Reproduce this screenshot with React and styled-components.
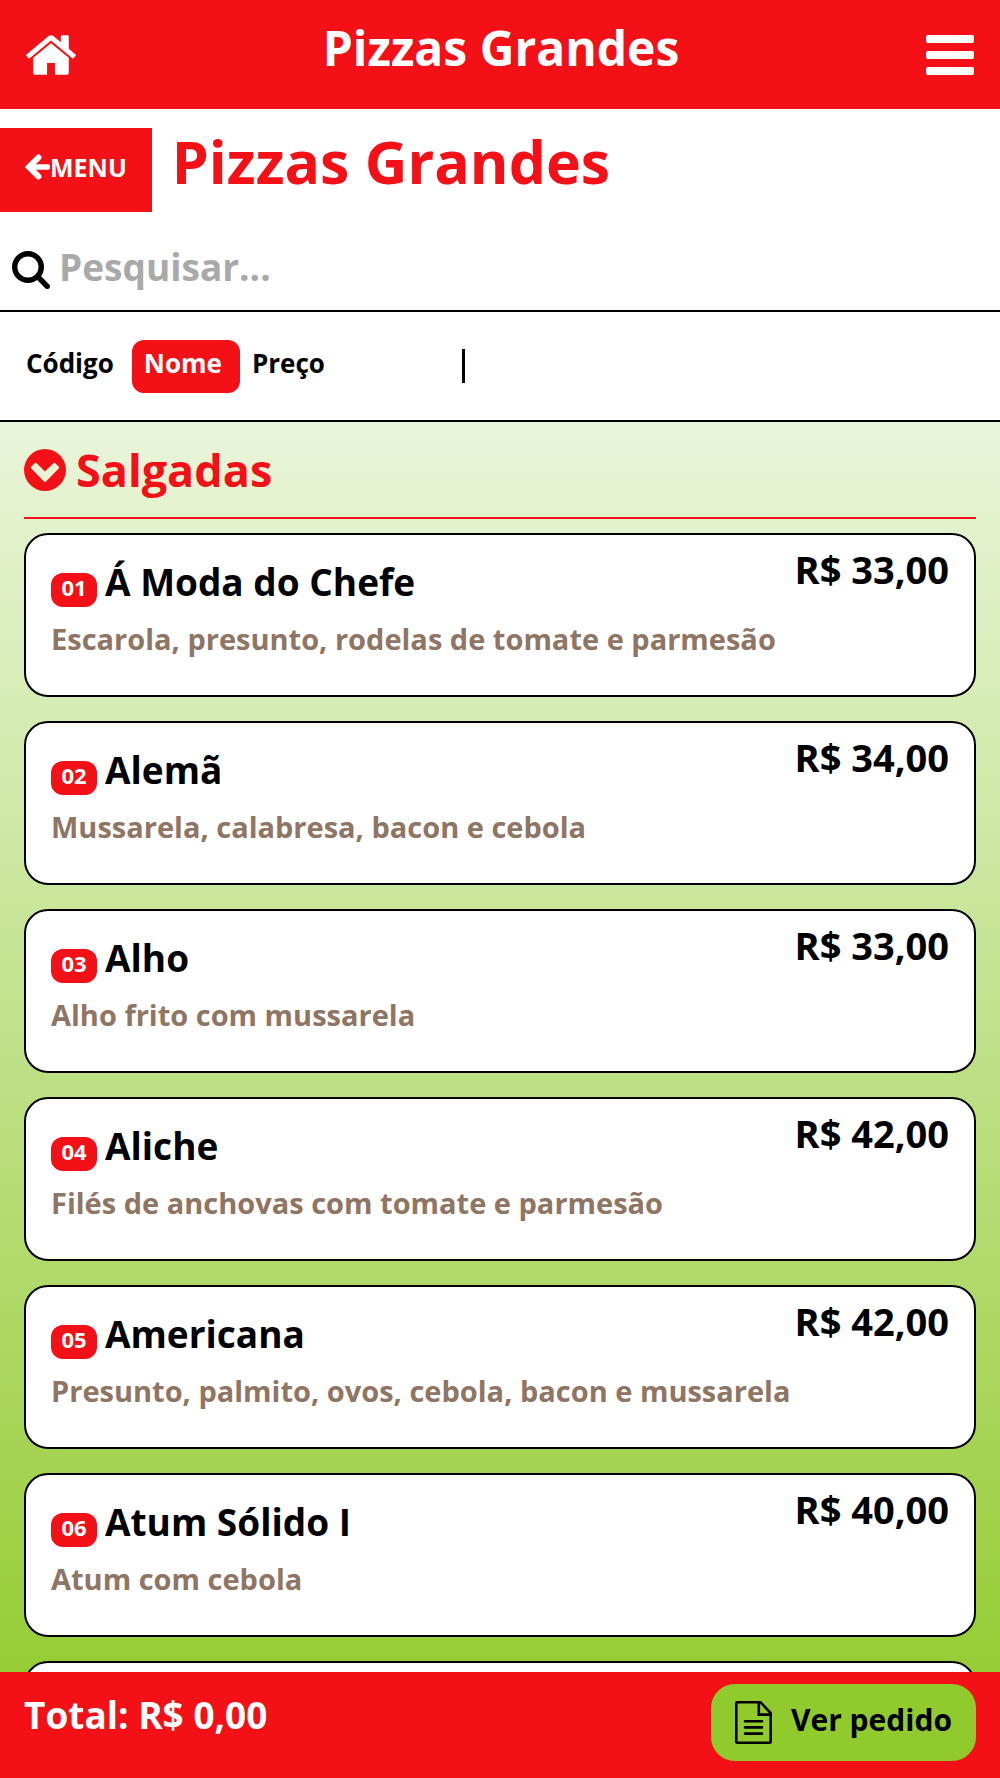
import React, { useState } from "react";
import styled, { createGlobalStyle } from "styled-components";

const pizzas = [
  {
    code: "01",
    name: "Á Moda do Chefe",
    price: "R$ 33,00",
    description: "Escarola, presunto, rodelas de tomate e parmesão",
  },
  {
    code: "02",
    name: "Alemã",
    price: "R$ 34,00",
    description: "Mussarela, calabresa, bacon e cebola",
  },
  {
    code: "03",
    name: "Alho",
    price: "R$ 33,00",
    description: "Alho frito com mussarela",
  },
  {
    code: "04",
    name: "Aliche",
    price: "R$ 42,00",
    description: "Filés de anchovas com tomate e parmesão",
  },
  {
    code: "05",
    name: "Americana",
    price: "R$ 42,00",
    description: "Presunto, palmito, ovos, cebola, bacon e mussarela",
  },
  {
    code: "06",
    name: "Atum Sólido I",
    price: "R$ 40,00",
    description: "Atum com cebola",
  },
];

const orders = ["Código", "Nome", "Preço"];

const HomeIcon = () => (
  <svg width="50" height="40" viewBox="21 256 1622 1280" fill="currentColor">
    <path d="M1408 992v480q0 26-19 45t-45 19h-384v-384h-256v384h-384q-26 0-45-19t-19-45v-480q0-1 .5-3t.5-3l575-474 575 474q1 2 1 6zm223-69l-62 74q-8 9-21 11h-3q-13 0-21-7l-692-577-692 577q-12 8-24 7-13-2-21-11l-62-74q-8-10-7-23.5t11-21.5l719-599q32-26 76-26t76 26l244 204v-195q0-14 9-23t23-9h192q14 0 23 9t9 23v408l219 182q10 8 11 21.5t-7 23.5z" />
  </svg>
);

const BarsIcon = () => (
  <svg width="48" height="40" viewBox="0 0 48 40" fill="currentColor">
    <rect width="48" height="8" rx="2" />
    <rect y="16" width="48" height="8" rx="2" />
    <rect y="32" width="48" height="8" rx="2" />
  </svg>
);

const ArrowIcon = () => (
  <svg width="25" height="26" viewBox="0 0 25 26" fill="none" stroke="currentColor">
    <path d="M13.5 3.5L4 13l9.5 9.5" strokeWidth="6" strokeLinecap="round" />
    <path d="M5 13h17.5" strokeWidth="5.5" strokeLinecap="round" />
  </svg>
);

const SearchIcon = () => (
  <svg width="38" height="38" viewBox="0 0 38 38" fill="none" stroke="currentColor">
    <circle cx="16" cy="16" r="13.3" strokeWidth="5.4" />
    <path d="M26 26l9.3 9.3" strokeWidth="5.4" strokeLinecap="round" />
  </svg>
);

const ChevronIcon = () => (
  <svg width="42" height="42" viewBox="0 0 42 42">
    <circle cx="21" cy="21" r="21" fill="#f31016" />
    <path
      d="M7.3 17.6l3.4-3.4q1-1 2 0L21 22.5l8.3-8.3q1-1 2 0l3.4 3.4q1 1 0 2L22 32.4q-1 1-2 0L7.3 19.6q-1-1 0-2z"
      fill="#e6f3d4"
    />
  </svg>
);

const OrderIcon = () => (
  <svg width="37" height="43" viewBox="0 0 37 43" fill="none" stroke="currentColor">
    <path
      d="M1.3 2.3q0-1 1-1H25.5L35.7 12V40.7q0 1-1 1H2.3q-1 0-1-1z"
      strokeWidth="2.6"
    />
    <path d="M23.8 1.5v12.1h11.9" strokeWidth="2.6" />
    <path d="M10 20.2h17M10 26.4h17M10 32.6h17" strokeWidth="2.6" strokeLinecap="round" />
  </svg>
);

const App = () => {
  const [order, setOrder] = useState("Nome");
  const [search, setSearch] = useState("");

  return (
    <Page>
      <GlobalStyle />
      <Header>
        <HomeLink href="#home" aria-label="Início">
          <HomeIcon />
        </HomeLink>
        <HeaderTitle>Pizzas Grandes</HeaderTitle>
        <BarsButton type="button" aria-label="Abrir menu">
          <BarsIcon />
        </BarsButton>
      </Header>

      <TitleRow>
        <MenuLink href="#menu">
          <ArrowIcon />
          MENU
        </MenuLink>
        <Title>Pizzas Grandes</Title>
      </TitleRow>

      <SearchRow>
        <SearchLabel htmlFor="search" aria-label="Pesquisar">
          <SearchIcon />
        </SearchLabel>
        <SearchInput
          id="search"
          type="text"
          placeholder="Pesquisar..."
          value={search}
          onChange={(e) => setSearch(e.target.value)}
        />
      </SearchRow>

      <OrderRow>
        {orders.map((item) => (
          <OrderButton
            key={item}
            type="button"
            $active={item === order}
            onClick={() => setOrder(item)}
          >
            {item}
          </OrderButton>
        ))}
        <Divider />
      </OrderRow>

      <Content>
        <SectionTitle>
          <ChevronIcon />
          Salgadas
        </SectionTitle>
        <List>
          {pizzas.map((pizza) => (
            <Card key={pizza.code}>
              <Name>
                <Code>{pizza.code}</Code>
                {pizza.name}
              </Name>
              <Price>{pizza.price}</Price>
              <Description>{pizza.description}</Description>
            </Card>
          ))}
          <Card aria-hidden="true" />
        </List>
      </Content>

      <Footer>
        <Total>Total: R$ 0,00</Total>
        <CheckoutButton type="button">
          <OrderIcon />
          <CheckoutText>Ver pedido</CheckoutText>
        </CheckoutButton>
      </Footer>
    </Page>
  );
};

export default App;

const GlobalStyle = createGlobalStyle`
  * {
    box-sizing: border-box;
  }

  body {
    margin: 0;
    font-family: "Open Sans", "Noto Sans", sans-serif;
    font-weight: 700;
    color: #000;
    background: #fff;
  }

  button,
  input {
    font: inherit;
    color: inherit;
    border: none;
    background: none;
    cursor: pointer;
  }

  svg {
    display: block;
    flex-shrink: 0;
  }
`;

const Page = styled.div`
  display: flex;
  flex-direction: column;
  height: 100vh;
`;

const Header = styled.header`
  display: flex;
  align-items: center;
  justify-content: space-between;
  flex-shrink: 0;
  min-height: 109px;
  padding: 0 26px;
  color: #fff;
  background: #f31016;
`;

const HomeLink = styled.a`
  color: inherit;
`;

const HeaderTitle = styled.div`
  padding-bottom: 14px;
  font-size: 48px;
  line-height: 64px;
`;

const BarsButton = styled.button`
  padding: 0;
`;

const TitleRow = styled.div`
  display: flex;
  align-items: center;
  flex-shrink: 0;
  padding-top: 19px;
`;

const MenuLink = styled.a`
  display: flex;
  align-items: center;
  height: 84px;
  padding: 0 25px 6px;
  font-size: 25px;
  color: #fff;
  text-decoration: none;
  background: #f31016;
`;

const Title = styled.h1`
  margin: 0;
  padding: 0 20px 18px;
  font-size: 59px;
  line-height: 64px;
  color: #f31016;
`;

const SearchRow = styled.div`
  display: flex;
  align-items: center;
  flex-shrink: 0;
  height: 100px;
  padding: 12px 12px 0;
  border-bottom: 2px solid #000;
`;

const SearchLabel = styled.label`
  padding-top: 6px;
`;

const SearchInput = styled.input`
  flex: 1;
  min-width: 0;
  padding: 0 9px;
  font-size: 37px;
  line-height: 52px;
  outline: none;
  cursor: text;

  &::placeholder {
    color: #a9a9a9;
    opacity: 1;
  }
`;

const OrderRow = styled.div`
  display: flex;
  align-items: center;
  flex-shrink: 0;
  height: 110px;
  padding: 0 14px;
  border-bottom: 2px solid #000;
`;

const OrderButton = styled.button`
  height: 53px;
  padding: 0 18px 6px 12px;
  font-size: 26px;
  color: ${({ $active }) => ($active ? "#fff" : "#000")};
  background: ${({ $active }) => ($active ? "#f31016" : "transparent")};
  border-radius: 12px;
`;

const Divider = styled.span`
  width: 3px;
  height: 34px;
  margin-left: 119px;
  background: #000;
`;

const Content = styled.main`
  flex: 1;
  min-height: 0;
  padding: 0 24px;
  overflow-y: auto;
  scrollbar-width: none;
  background: linear-gradient(#e9f5da, #96cd36);
`;

const SectionTitle = styled.h2`
  display: flex;
  align-items: center;
  gap: 10px;
  height: 97px;
  margin: 0;
  font-size: 45px;
  color: #f31016;
  border-bottom: 2px solid #f31016;
`;

const List = styled.div`
  display: flex;
  flex-direction: column;
  gap: 24px;
  padding: 14px 0 24px;
`;

const Card = styled.article`
  display: grid;
  grid-template-columns: 1fr auto;
  align-content: start;
  min-height: 164px;
  padding: 8px 25px;
  background: #fff;
  border: 2px solid #000;
  border-radius: 24px;
`;

const Name = styled.h3`
  display: flex;
  align-items: baseline;
  gap: 8px;
  margin: 0;
  padding-top: 14px;
  font-size: 37px;
  line-height: 50px;
`;

const Code = styled.span`
  min-width: 46px;
  padding-bottom: 5px;
  font-size: 22px;
  line-height: 29px;
  text-align: center;
  color: #fff;
  background: #f31016;
  border-radius: 12px;
`;

const Price = styled.div`
  font-size: 38px;
  line-height: 52px;
`;

const Description = styled.p`
  grid-column: 1 / -1;
  margin: 12px 0 0;
  font-size: 29px;
  line-height: 40px;
  color: #8f7564;
`;

const Footer = styled.footer`
  display: flex;
  align-items: center;
  justify-content: space-between;
  flex-shrink: 0;
  min-height: 106px;
  padding: 12px 24px 17px;
  color: #fff;
  background: #f31016;
`;

const Total = styled.div`
  padding-bottom: 16px;
  font-size: 37px;
  line-height: 50px;
`;

const CheckoutButton = styled.button`
  display: flex;
  align-items: center;
  gap: 19px;
  height: 77px;
  padding: 0 24px;
  color: #000;
  background: #91ca2c;
  border-radius: 24px;
`;

const CheckoutText = styled.span`
  padding-bottom: 6px;
  font-size: 30px;
`;
